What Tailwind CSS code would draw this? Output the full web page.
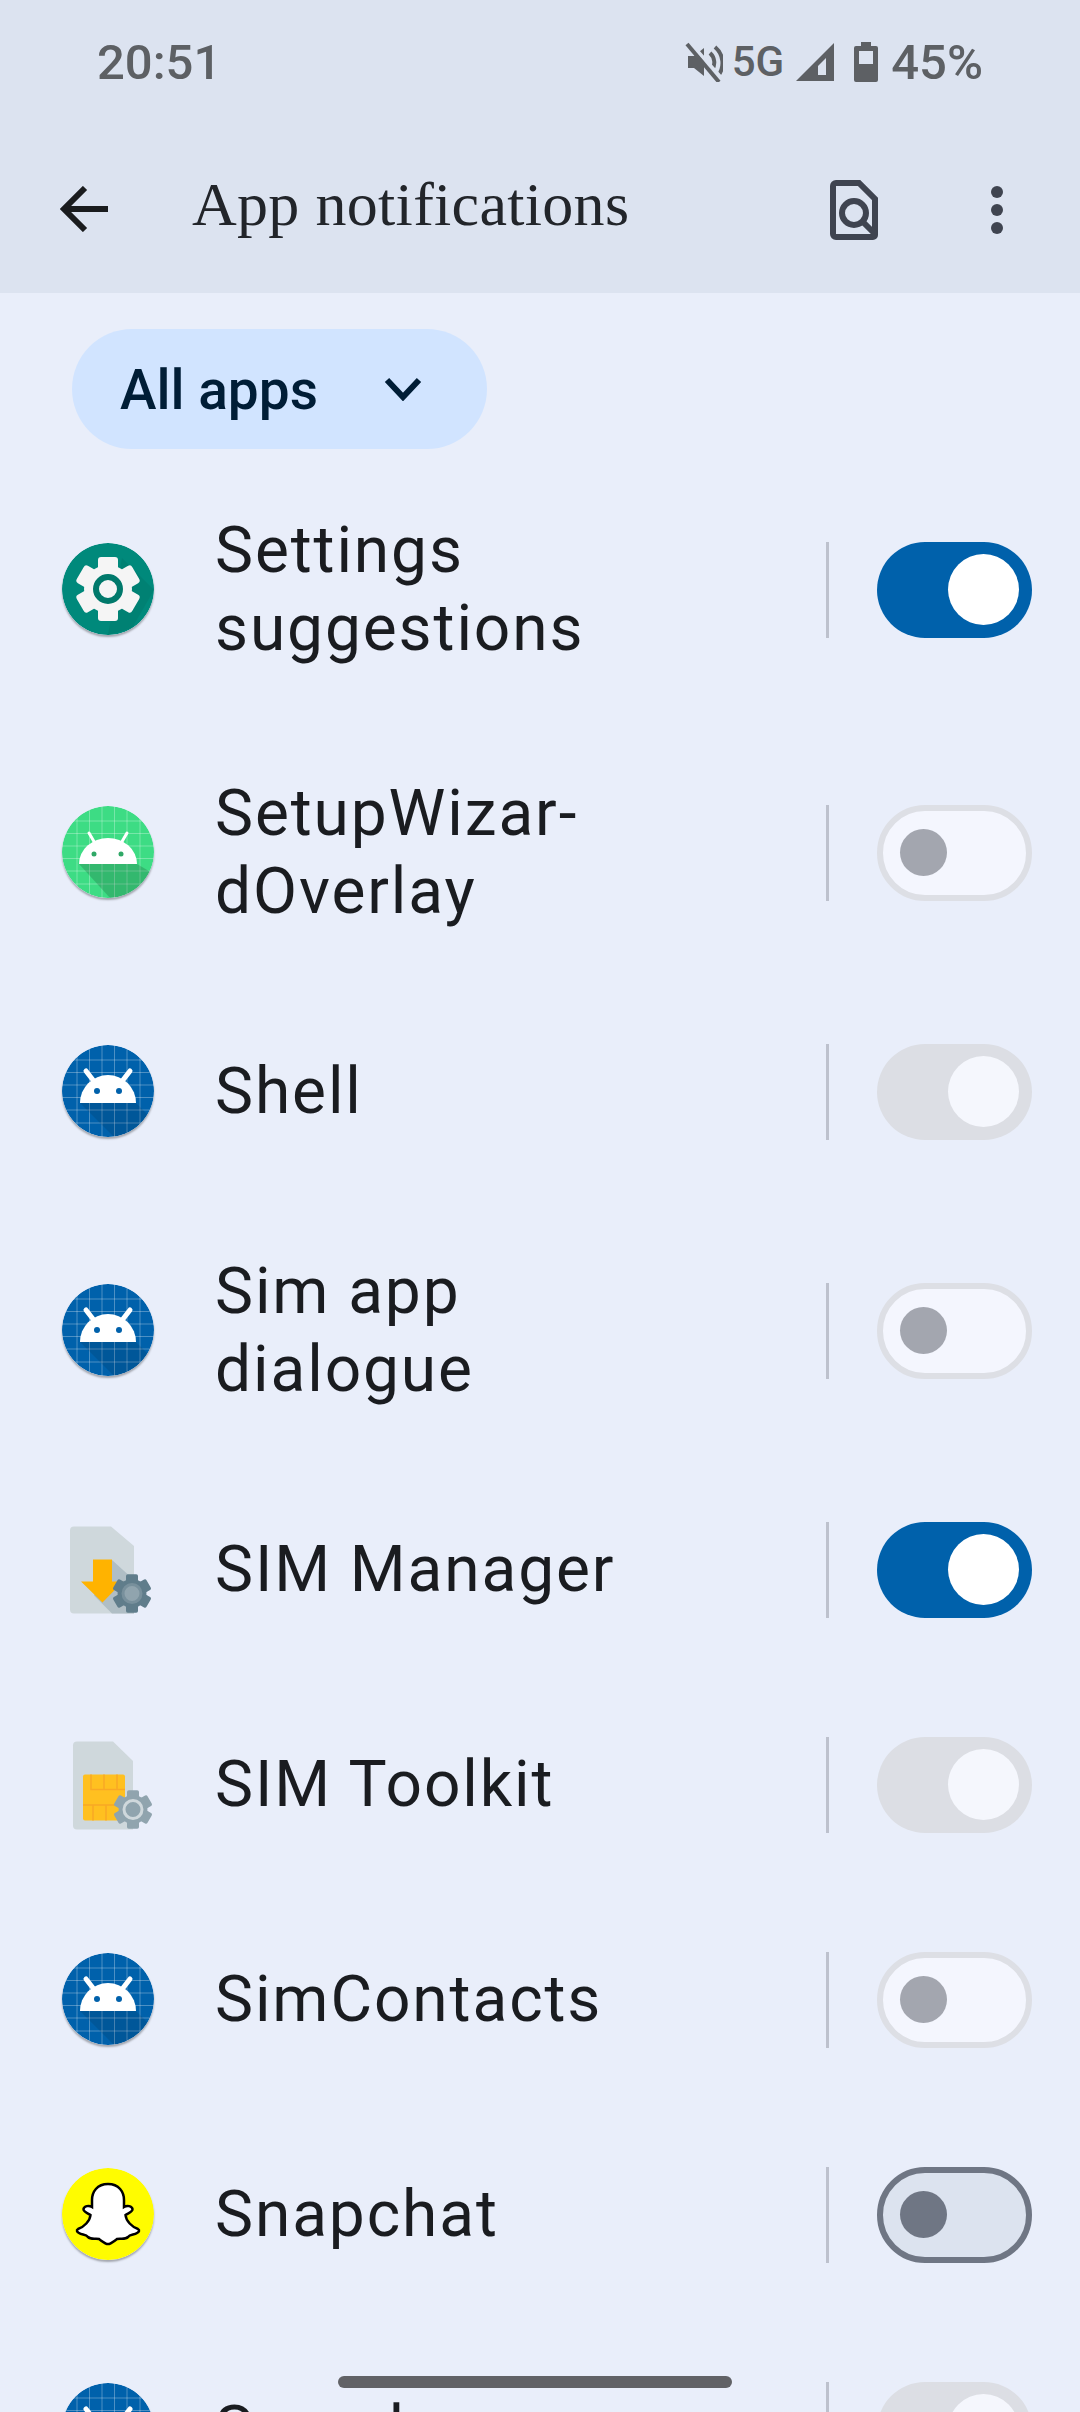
<!DOCTYPE html>
<html lang="en">
<head>
  <meta charset="UTF-8">
  <title>App notifications</title>
  <script src="https://cdn.jsdelivr.net/npm/@tailwindcss/browser@4"></script>
</head>
<body>
  <svg class="hidden">
    <defs>
      <symbol id="grid" viewBox="0 0 92 92">
        <g stroke="#fff" stroke-opacity=".3" stroke-width="1">
          <path d="M15 0v92M27.500 0v92M40 0v92M52.500 0v92M65 0v92M78 0v92M0 15h92M0 27.500h92M0 40h92M0 52.500h92M0 65h92M0 78h92"/>
        </g>
      </symbol>
      <symbol id="droid-blue" viewBox="0 0 92 92">
        <circle cx="46" cy="46" r="46" fill="#0061ab"/>
        <use href="#grid" width="92" height="92"/>
        <path d="M18 58h56l18 18-16 16H52z" fill="#000" fill-opacity=".1"/>
        <path d="M24 26l7 9M68 26l-7 9" stroke="#fff" stroke-width="5" stroke-linecap="round"/>
        <path d="M18 58a28 28 0 0 1 56 0z" fill="#fff"/>
        <circle cx="35" cy="46" r="3" fill="#0061ab"/>
        <circle cx="57" cy="46" r="3" fill="#0061ab"/>
      </symbol>
      <symbol id="gear" viewBox="-40 -40 80 80">
        <circle r="24"/>
        <rect x="-10" y="-32" width="20" height="16" rx="3"/>
        <rect x="-10" y="-32" width="20" height="16" rx="3" transform="rotate(60)"/>
        <rect x="-10" y="-32" width="20" height="16" rx="3" transform="rotate(120)"/>
        <rect x="-10" y="-32" width="20" height="16" rx="3" transform="rotate(180)"/>
        <rect x="-10" y="-32" width="20" height="16" rx="3" transform="rotate(240)"/>
        <rect x="-10" y="-32" width="20" height="16" rx="3" transform="rotate(300)"/>
      </symbol>
    </defs>
  </svg>

  <div class="relative h-[2412px] w-[1080px] overflow-hidden bg-[#e9eefa] font-['Roboto',sans-serif]">
    <header class="h-[293px] bg-[#dce3f0]">
      <div class="flex h-[124px] items-center justify-between pl-[97px] pr-[97px] text-[#5d6064]">
        <span class="text-[49px] font-medium leading-none">20:51</span>
        <div class="flex items-center font-medium leading-none">
          <svg class="h-[40px] w-[38px]" viewBox="0 0 38 40" fill="none" stroke="#5d6064">
            <path d="M3 14h6l10-8v28l-10-8H3z" fill="#5d6064" stroke="none"/>
            <path d="M25 11a13 13 0 0 1 2 17M30 5a21 21 0 0 1 3 29" stroke-width="4"/>
            <path d="M6 2l32 36" stroke="#dce3f0" stroke-width="4"/>
            <path d="M2 2l32 38" stroke-width="4"/>
          </svg>
          <span class="ml-[9px] text-[42px]">5G</span>
          <svg class="ml-[12px] h-[38px] w-[38px]" viewBox="0 0 38 38">
            <path d="M38 0v38H0z" fill="#5d6064"/>
            <path d="M30 15v17h-8v-9z" fill="#dce3f0"/>
          </svg>
          <svg class="ml-[20px] h-[40px] w-[24px]" viewBox="0 0 24 40">
            <path d="M7 0h10v4h5a2 2 0 0 1 2 2v32a2 2 0 0 1-2 2H2a2 2 0 0 1-2-2V6a2 2 0 0 1 2-2h5z" fill="#5d6064"/>
            <rect x="5" y="9" width="14" height="13" fill="#dce3f0"/>
          </svg>
          <span class="ml-[13px] text-[49px]">45%</span>
        </div>
      </div>
      <div class="flex h-[169px] items-start pl-[59px] pr-[77px]">
        <svg class="mt-[62px] h-[46px] w-[49px]" viewBox="0 0 49 46" fill="none" stroke="#1a1c1e" stroke-width="6">
          <path d="M49 23H5M26 2L5 23l21 21"/>
        </svg>
        <h1 class="ml-[84px] mt-[45px] font-['Liberation_Serif',serif] text-[62px] font-normal leading-[70px] tracking-[0.3px] text-[#22252a]">App notifications</h1>
        <svg class="ml-auto mt-[56px] h-[60px] w-[48px]" viewBox="0 0 48 60" fill="none" stroke="#3f4450" stroke-width="6">
          <path d="M6 3h23l16 16v36a2 2 0 0 1-2 2H6a3 3 0 0 1-3-3V6a3 3 0 0 1 3-3z"/>
          <circle cx="24" cy="33" r="12"/>
          <path d="M33 42l12 12"/>
        </svg>
        <div class="ml-[113px] mt-[62px] flex flex-col gap-[6px]">
          <span class="size-[12px] rounded-full bg-[#3f4450]"></span>
          <span class="size-[12px] rounded-full bg-[#3f4450]"></span>
          <span class="size-[12px] rounded-full bg-[#3f4450]"></span>
        </div>
      </div>
    </header>

    <div class="px-[72px] pt-[36px]">
      <div class="flex h-[120px] w-[415px] items-center rounded-full bg-[#d1e4ff] pl-[48px] text-[#001d36]">
        <span class="pt-[2px] text-[55px] font-medium leading-none">All apps</span>
        <svg class="ml-[66px] h-[24px] w-[38px]" viewBox="0 0 38 24" fill="none" stroke="#001d36" stroke-width="6">
          <path d="M3 3l16 17L35 3"/>
        </svg>
      </div>
    </div>

    <main class="pt-[9px] text-[64px] leading-[78px] tracking-[1.9px] text-[#1a1c20]">
      <!-- Settings suggestions -->
      <div class="flex h-[263px] items-center pl-[62px]">
        <svg class="mb-[2px] size-[92px] rounded-full shadow-[0_2px_2px_rgba(0,0,0,0.3)]" viewBox="0 0 92 92">
          <circle cx="46" cy="46" r="46" fill="#00897b"/>
          <path d="M60 15L92 47 70 85 46 92z" fill="#00796b" fill-opacity=".5"/>
          <use href="#gear" x="6" y="6" width="80" height="80" fill="#f5f5f5"/>
          <circle cx="46" cy="46" r="12" fill="none" stroke="#00796b" stroke-width="6"/>
        </svg>
        <div class="ml-[61px] w-[611px]">Settings<br>suggestions</div>
        <div class="mr-[48px] h-[96px] w-[3px] bg-[#bdc1cd]"></div>
        <div class="flex h-[96px] w-[155px] items-center justify-end rounded-full bg-[#0061ab] pr-[13px]"><span class="size-[71px] rounded-full bg-white"></span></div>
      </div>
      <!-- SetupWizardOverlay -->
      <div class="flex h-[263px] items-center pl-[62px]">
        <svg class="mb-[2px] size-[92px] rounded-full shadow-[0_2px_2px_rgba(0,0,0,0.3)]" viewBox="0 0 92 92">
          <circle cx="46" cy="46" r="46" fill="#3ddc84"/>
          <use href="#grid" width="92" height="92"/>
          <path d="M17 58h58l17 10-24 22-20 2z" fill="#000" fill-opacity=".16"/>
          <path d="M27 27l7 12M65 27l-7 12" stroke="#fff" stroke-width="3" stroke-linecap="round"/>
          <path d="M17 58a29 26 0 0 1 58 0z" fill="#fff"/>
          <circle cx="32" cy="48" r="2.500" fill="#2fa866"/>
          <circle cx="59" cy="48" r="2.500" fill="#2fa866"/>
        </svg>
        <div class="ml-[61px] w-[611px]">SetupWizar-<br>dOverlay</div>
        <div class="mr-[48px] h-[96px] w-[3px] bg-[#bdc1cd]"></div>
        <div class="flex h-[96px] w-[155px] items-center rounded-full border-[6px] border-[#dddfe5] bg-[#f4f6fe] pl-[17px]"><span class="size-[47px] rounded-full bg-[#a3a6af]"></span></div>
      </div>
      <!-- Shell -->
      <div class="flex h-[215px] items-center pl-[62px]">
        <svg class="mb-[2px] size-[92px] rounded-full shadow-[0_2px_2px_rgba(0,0,0,0.3)]"><use href="#droid-blue" width="92" height="92"/></svg>
        <div class="ml-[61px] w-[611px]">Shell</div>
        <div class="mr-[48px] h-[96px] w-[3px] bg-[#bdc1cd]"></div>
        <div class="flex h-[96px] w-[155px] items-center justify-end rounded-full bg-[#dcdee4] pr-[13px]"><span class="size-[71px] rounded-full bg-[#f5f7fd]"></span></div>
      </div>
      <!-- Sim app dialogue -->
      <div class="flex h-[263px] items-center pl-[62px]">
        <svg class="mb-[2px] size-[92px] rounded-full shadow-[0_2px_2px_rgba(0,0,0,0.3)]"><use href="#droid-blue" width="92" height="92"/></svg>
        <div class="ml-[61px] w-[611px]">Sim app<br>dialogue</div>
        <div class="mr-[48px] h-[96px] w-[3px] bg-[#bdc1cd]"></div>
        <div class="flex h-[96px] w-[155px] items-center rounded-full border-[6px] border-[#dddfe5] bg-[#f4f6fe] pl-[17px]"><span class="size-[47px] rounded-full bg-[#a3a6af]"></span></div>
      </div>
      <!-- SIM Manager -->
      <div class="flex h-[215px] items-center pl-[62px]">
        <svg class="size-[92px]" viewBox="0 0 92 92">
          <path d="M12 2.500h37L72 22v67.500H12a4 4 0 0 1-4-4v-79a4 4 0 0 1 4-4z" fill="#cfd8dc"/>
          <path d="M50 36l22 20v33.500H50l-18-18z" fill="#b0bec5"/>
          <path d="M31 35.500h19v22h11L40.500 78.500 19 57.500h12z" fill="#ffb300"/>
          <svg x="46" y="45.500" width="48" height="44" viewBox="-24 -24 48 44" overflow="hidden">
            <use href="#gear" x="-24" y="-24" width="48" height="48" fill="#607d8b"/>
            <circle r="9" fill="#90a4ae" stroke="#78909c" stroke-width="3"/>
          </svg>
        </svg>
        <div class="ml-[61px] w-[611px]">SIM Manager</div>
        <div class="mr-[48px] h-[96px] w-[3px] bg-[#bdc1cd]"></div>
        <div class="flex h-[96px] w-[155px] items-center justify-end rounded-full bg-[#0061ab] pr-[13px]"><span class="size-[71px] rounded-full bg-white"></span></div>
      </div>
      <!-- SIM Toolkit -->
      <div class="flex h-[215px] items-center pl-[62px]">
        <svg class="size-[92px]" viewBox="0 0 92 92">
          <path d="M15 2.500h36L71 22v68.500H15a4 4 0 0 1-4-4v-80a4 4 0 0 1 4-4z" fill="#cfd8dc"/>
          <rect x="21" y="35.500" width="42" height="46" rx="2" fill="#ffc020"/>
          <path d="M29 35.500v15h34M42 35.500v15M55 35.500v15M21 66h42M31 66v15.500M44 66v15.500" fill="none" stroke="#f9a825" stroke-width="1.500"/>
          <svg x="47" y="46.500" width="48" height="44" viewBox="-24 -24 48 44" overflow="hidden">
            <use href="#gear" x="-24" y="-24" width="48" height="48" fill="#90a4ae"/>
            <circle r="9" fill="#90a4ae" stroke="#cfd8dc" stroke-width="3"/>
          </svg>
        </svg>
        <div class="ml-[61px] w-[611px]">SIM Toolkit</div>
        <div class="mr-[48px] h-[96px] w-[3px] bg-[#bdc1cd]"></div>
        <div class="flex h-[96px] w-[155px] items-center justify-end rounded-full bg-[#dcdee4] pr-[13px]"><span class="size-[71px] rounded-full bg-[#f5f7fd]"></span></div>
      </div>
      <!-- SimContacts -->
      <div class="flex h-[215px] items-center pl-[62px]">
        <svg class="mb-[2px] size-[92px] rounded-full shadow-[0_2px_2px_rgba(0,0,0,0.3)]"><use href="#droid-blue" width="92" height="92"/></svg>
        <div class="ml-[61px] w-[611px]">SimContacts</div>
        <div class="mr-[48px] h-[96px] w-[3px] bg-[#bdc1cd]"></div>
        <div class="flex h-[96px] w-[155px] items-center rounded-full border-[6px] border-[#dddfe5] bg-[#f4f6fe] pl-[17px]"><span class="size-[47px] rounded-full bg-[#a3a6af]"></span></div>
      </div>
      <!-- Snapchat -->
      <div class="flex h-[215px] items-center pl-[62px]">
        <svg class="mb-[2px] size-[92px] rounded-full shadow-[0_2px_2px_rgba(0,0,0,0.3)]" viewBox="0 0 92 92">
          <circle cx="46" cy="46" r="46" fill="#fffc00"/>
          <path d="M46 16C35 16 30 24 30 32L30 39C27 37 22 38 21.500 41C21 44 26 45 28.500 47C28 53 22 59 16 61C14 62 15 64 17 65C20 67 24 66 26 69C29 72 34 70 37 71C40 73 43 76 46 76C49 76 52 73 55 71C58 70 63 72 66 69C68 66 72 67 75 65C77 64 78 62 76 61C70 59 64 53 63.500 47C66 45 71 44 70.500 41C70 38 65 37 62 39L62 32C62 24 57 16 46 16Z" fill="#fff" stroke="#000" stroke-width="2.500"/>
        </svg>
        <div class="ml-[61px] w-[611px]">Snapchat</div>
        <div class="mr-[48px] h-[96px] w-[3px] bg-[#bdc1cd]"></div>
        <div class="flex h-[96px] w-[155px] items-center rounded-full border-[6px] border-[#6f7684] bg-[#dce3ef] pl-[17px]"><span class="size-[47px] rounded-full bg-[#6f7684]"></span></div>
      </div>
      <!-- Next row, cut off by the window -->
      <div class="flex h-[215px] items-center pl-[62px]">
        <svg class="mb-[2px] size-[92px] rounded-full shadow-[0_2px_2px_rgba(0,0,0,0.3)]"><use href="#droid-blue" width="92" height="92"/></svg>
        <div class="ml-[61px] w-[611px]">Sounds</div>
        <div class="mr-[48px] h-[96px] w-[3px] bg-[#bdc1cd]"></div>
        <div class="flex h-[96px] w-[155px] items-center justify-end rounded-full bg-[#dcdee4] pr-[13px]"><span class="size-[71px] rounded-full bg-[#f5f7fd]"></span></div>
      </div>
    </main>

    <div class="absolute bottom-[24px] left-[338px] h-[12px] w-[394px] rounded-full bg-[#616266]"></div>
  </div>
</body>
</html>
